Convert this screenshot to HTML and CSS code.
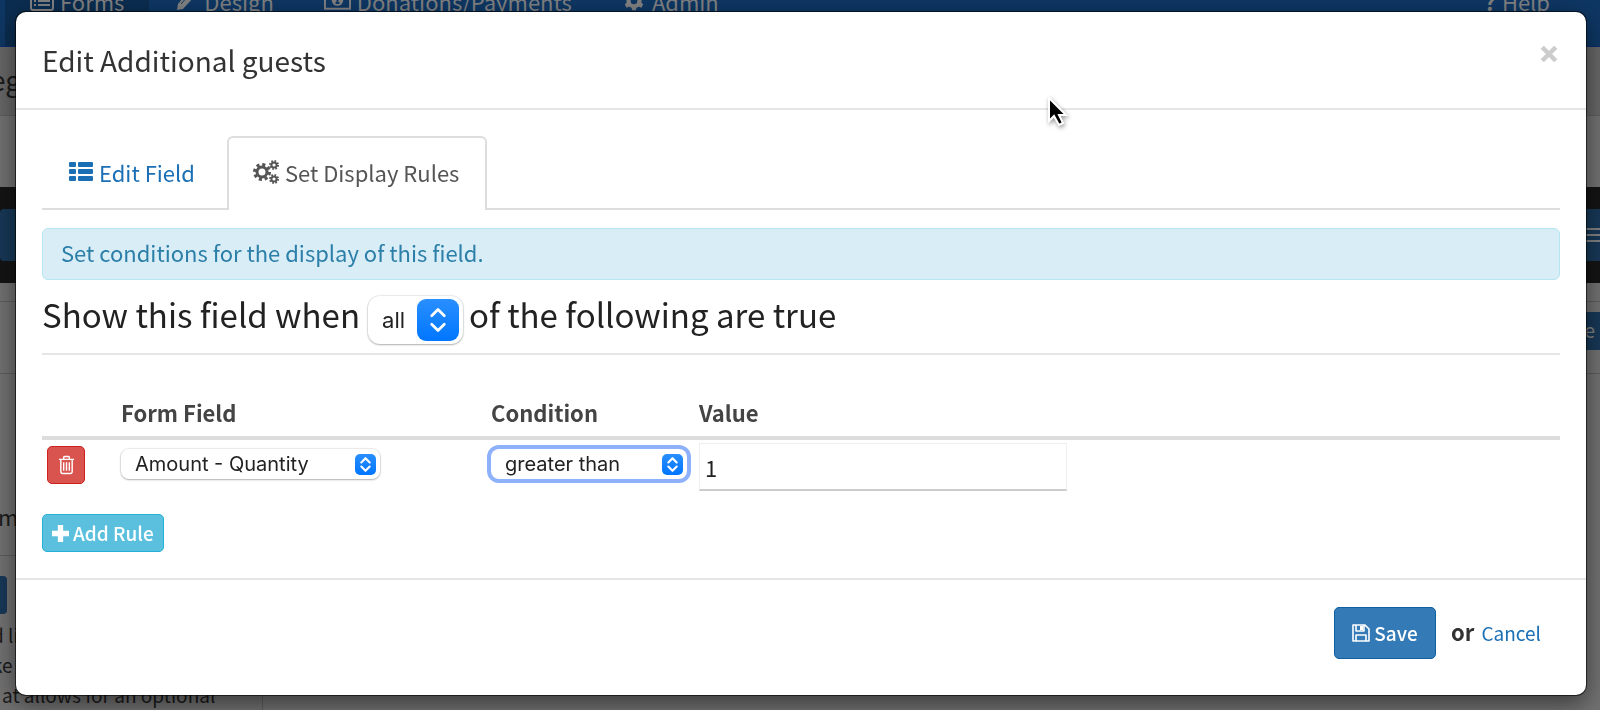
FILE: index.html
```html
<!DOCTYPE html>
<html lang="en">
<head>
    <meta charset="UTF-8">
    <meta name="viewport" content="width=device-width, initial-scale=1.0">
    <title>Edit Additional guests</title>
    <link rel="stylesheet" href="styles.css">
</head>
<body>
    <!-- page behind the dialog -->
    <div class="page">
        <nav class="navbar">
            <a class="nav-item active" href="#">
                <svg class="nav-icon" viewBox="0 0 24 20"><rect x="1" y="1" width="22" height="18" rx="2" fill="none" stroke="currentColor" stroke-width="2"/><path d="M4 6h2M8 6h12M4 10h2M8 10h12M4 14h2M8 14h12" stroke="currentColor" stroke-width="2"/></svg>
                Forms
            </a>
            <a class="nav-item" href="#">
                <svg class="nav-icon" viewBox="0 0 24 20"><path d="M3 19l1-6L14 1l6 5L9 18z" fill="currentColor"/><path d="M7 13l8-9" stroke="#0e3763" stroke-width="1"/></svg>
                Design
            </a>
            <a class="nav-item" href="#">
                <svg class="nav-icon wide" viewBox="0 0 28 20"><rect x="1" y="1" width="26" height="17" fill="none" stroke="currentColor" stroke-width="2"/><circle cx="14" cy="9" r="6" fill="currentColor"/><path d="M12 7l2-1v6M12 12h4" fill="none" stroke="#0e3763" stroke-width="2"/></svg>
                Donations/Payments
            </a>
            <a class="nav-item" href="#">
                <svg class="nav-icon" viewBox="0 0 24 24"><path d="M10 1h4l1 3 3 1 3-1 2 4-2 2v4l2 2-2 4-3-1-3 1-1 3h-4l-1-3-3-1-3 1-2-4 2-2v-4L1 8l2-4 3 1 3-1z" fill="currentColor"/><circle cx="12" cy="12" r="4" fill="#0e3763"/></svg>
                Admin
            </a>
            <a class="nav-item help" href="#"><b>?</b> Help</a>
        </nav>
        <div class="page-title">eg</div>
        <div class="page-space"></div>
        <div class="toolbar">
            <span class="tool"></span>
            <span class="tool menu"><i></i><i></i><i></i></span>
        </div>
        <div class="row-tabs"><span class="side-btn">e</span></div>
        <div class="row-field">m</div>
        <div class="row-help">
            <span class="help-btn"></span>
            <p class="clipped">d li</p>
            <p class="clipped">ke</p>
            <p>at allows for an optional</p>
        </div>
    </div>

    <div class="backdrop">
        <div class="modal" role="dialog" aria-labelledby="title">
            <div class="modal-header">
                <h4 id="title">Edit Additional guests</h4>
                <button class="close" type="button" aria-label="Close">
                    <svg viewBox="0 0 16 16"><path d="M2 2l12 12M14 2 2 14" stroke="currentColor" stroke-width="4"/></svg>
                </button>
            </div>
            <div class="modal-body">
                <ul class="tabs">
                    <li><a href="#">
                        <svg class="icon-list" viewBox="0 0 24 20"><path d="M1 0h5q1 0 1 1v3q0 1-1 1H1Q0 5 0 4V1q0-1 1-1zM10 0h13q1 0 1 1v3q0 1-1 1H10Q9 5 9 4V1q0-1 1-1zM1 7h5q1 0 1 1v3q0 1-1 1H1q-1 0-1-1V8q0-1 1-1zM10 7h13q1 0 1 1v3q0 1-1 1H10q-1 0-1-1V8q0-1 1-1zM1 14h5q1 0 1 1v3q0 1-1 1H1q-1 0-1-1v-3q0-1 1-1zM10 14h13q1 0 1 1v3q0 1-1 1H10q-1 0-1-1v-3q0-1 1-1z" fill="currentColor"/></svg>
                        Edit Field
                    </a></li>
                    <li class="active"><a href="#">
                        <svg class="icon-gears" viewBox="0 0 26 24"><g fill="none" stroke="currentColor"><circle cx="9" cy="12" r="5" stroke-width="3"/><circle cx="9" cy="12" r="7" stroke-width="4" stroke-dasharray="2.9 2.6"/><circle cx="21" cy="5" r="2.6" stroke-width="2"/><circle cx="21" cy="5" r="4" stroke-width="2" stroke-dasharray="1.6 1.54"/><circle cx="21" cy="19" r="2.6" stroke-width="2"/><circle cx="21" cy="19" r="4" stroke-width="2" stroke-dasharray="1.6 1.54"/></g></svg>
                        Set Display Rules
                    </a></li>
                </ul>
                <div class="alert">Set conditions for the display of this field.</div>
                <div class="match">
                    <label for="match">Show this field when</label>
                    <span class="select large">
                        <select id="match"><option>all</option></select>
                        <svg viewBox="0 0 20 20"><path d="M7 8l3-3 3 3M7 12l3 3 3-3" fill="none" stroke="#fff" stroke-width="1.3" stroke-linecap="round" stroke-linejoin="round"/></svg>
                    </span>
                    <span>of the following are true</span>
                </div>
                <table class="rules">
                    <thead>
                        <tr>
                            <th class="col-del"></th>
                            <th class="col-field">Form Field</th>
                            <th class="col-cond">Condition</th>
                            <th>Value</th>
                        </tr>
                    </thead>
                    <tbody>
                        <tr>
                            <td class="col-del">
                                <button class="btn btn-danger" type="button" aria-label="Delete rule">
                                    <svg viewBox="0 0 18 20"><path d="M1 4h16M6 4V2q0-1 1-1h4q1 0 1 1v2M3 4v13q0 2 2 2h8q2 0 2-2V4M6 7v9M9 7v9M12 7v9" fill="none" stroke="currentColor" stroke-width="1.5"/></svg>
                                </button>
                            </td>
                            <td class="col-field">
                                <span class="select field">
                                    <select aria-label="Form Field"><option>Amount - Quantity</option></select>
                                    <svg viewBox="0 0 20 20"><path d="M6 8l4-4 4 4M6 12l4 4 4-4" fill="none" stroke="#fff" stroke-width="2" stroke-linecap="round" stroke-linejoin="round"/></svg>
                                </span>
                            </td>
                            <td class="col-cond">
                                <span class="select focused">
                                    <select aria-label="Condition"><option>greater than</option></select>
                                    <svg viewBox="0 0 20 20"><path d="M6 8l4-4 4 4M6 12l4 4 4-4" fill="none" stroke="#fff" stroke-width="2" stroke-linecap="round" stroke-linejoin="round"/></svg>
                                </span>
                            </td>
                            <td><input class="value" type="text" value="1" aria-label="Value"></td>
                        </tr>
                    </tbody>
                </table>
                <button class="btn btn-info" type="button">
                    <svg viewBox="0 0 16 16"><path d="M8 0v16M0 8h16" stroke="currentColor" stroke-width="5"/></svg>
                    Add Rule
                </button>
            </div>
            <div class="modal-footer">
                <button class="btn btn-primary" type="button">
                    <svg viewBox="0 0 18 18"><path d="M1 1h12l4 4v12H1zM4 1v6h8V1M4 17v-6h10v6" fill="none" stroke="currentColor" stroke-width="1.6" stroke-linejoin="round"/><path d="M8 2h3v4H8z" fill="currentColor"/></svg>
                    Save
                </button>
                <strong>or</strong>
                <a href="#">Cancel</a>
            </div>
        </div>
    </div>
    <svg class="cursor" viewBox="0 0 19 30"><path d="M1 1v23l5-5 5 9 4-2-4-8h7z" fill="#000" stroke="#fff" stroke-width="2"/></svg>
</body>
</html>
```

FILE: styles.css
```css
* {
    box-sizing: border-box;
}
body {
    margin: 0;
    height: 100vh;
    overflow: hidden;
    font-family: "Noto Sans CJK SC", "Noto Sans", sans-serif;
    font-size: 22px;
    line-height: 32px;
    color: #333;
    background-color: #fff;
}
a {
    color: #1b6fb5;
    text-decoration: none;
}
button, select, input {
    font-family: inherit;
}

/* page behind the dialog */
.page {
    height: 100vh;
    overflow: hidden;
    background-color: #717171;
    color: #1a1a1a;
}
.navbar {
    display: flex;
    align-items: flex-start;
    height: 47px;
    padding-left: 5px;
    background-color: #0e3763;
    border-bottom: 1px solid #0a2d6b;
}
.nav-item {
    display: flex;
    align-items: center;
    gap: 6px;
    height: 46px;
    padding: 0 25px 44px;
    line-height: 2px;
    color: #808080;
}
.nav-item.active {
    background-color: #0b2d50;
}
.nav-item.help {
    margin-left: auto;
    padding-right: 50px;
}
.nav-icon {
    width: 24px;
    height: 20px;
    flex: none;
}
.nav-icon.wide {
    width: 27px;
}
.page-title {
    height: 69px;
    padding-top: 16px;
    font-size: 28px;
    text-indent: -10px;
    background-color: #666;
    border-bottom: 1px solid #5c5c5c;
}
.page-space {
    height: 71px;
}
.toolbar {
    display: flex;
    align-items: center;
    justify-content: space-between;
    height: 96px;
    background-color: #141414;
}
.tool {
    width: 20px;
    height: 52px;
    background-color: #173857;
    border-radius: 4px;
}
.menu {
    display: flex;
    flex-direction: column;
    justify-content: center;
    gap: 4px;
    border-radius: 0;
}
.menu i {
    height: 2px;
    background-color: #808080;
}
.row-tabs {
    display: flex;
    justify-content: flex-end;
    align-items: flex-start;
    height: 73px;
    margin-top: 18px;
    padding-top: 10px;
    border-top: 1px solid #5c5c5c;
    border-bottom: 1px solid #5c5c5c;
}
.side-btn {
    width: 16px;
    height: 38px;
    font-size: 20px;
    line-height: 36px;
    color: #808080;
    background-color: #173857;
}
.row-field {
    height: 181px;
    padding-top: 126px;
    text-indent: -2px;
}
.row-help {
    width: 263px;
    height: 160px;
    padding-top: 20px;
    border-top: 1px solid #5c5c5c;
    border-right: 1px solid #5c5c5c;
    font-size: 19px;
    line-height: 30px;
}
.row-help p {
    margin: 0;
    padding-left: 2px;
}
.row-help .clipped {
    text-indent: -10px;
}
.help-btn {
    display: block;
    width: 7px;
    height: 38px;
    margin-bottom: 6px;
    background-color: #173857;
    border-radius: 0 4px 4px 0;
}

/* dialog */
.backdrop {
    position: fixed;
    inset: 0;
    padding: 12px 14px 15px 16px;
}
.modal {
    display: flex;
    flex-direction: column;
    height: 100%;
    background-color: #fff;
    border-radius: 10px;
    box-shadow: 0 0 0 1px rgba(0, 0, 0, 0.6), 0 8px 24px rgba(0, 0, 0, 0.5);
}
.modal-header {
    display: flex;
    justify-content: space-between;
    align-items: flex-start;
    height: 98px;
    padding: 32px 28px 0 26px;
    border-bottom: 2px solid #e5e5e5;
}
.modal-header h4 {
    margin: 0;
    font-size: 28px;
    font-weight: 400;
}
.close {
    padding: 1px 0 0;
    border: 0;
    background: none;
    color: #ccc;
    line-height: 0;
}
.close svg {
    width: 18px;
    height: 18px;
}
.modal-body {
    flex: 1;
    padding: 26px;
}
.tabs {
    display: flex;
    margin: 0 0 18px;
    padding: 0;
    list-style: none;
    border-bottom: 2px solid #ddd;
}
.tabs li {
    margin-bottom: -2px;
}
.tabs a {
    display: flex;
    align-items: center;
    gap: 6px;
    height: 74px;
    padding: 0 32px 2px 27px;
}
.tabs .active a {
    padding: 0 26px 4px 24px;
    color: #555;
    background-color: #fff;
    border: 2px solid #ddd;
    border-bottom: 0;
    border-radius: 6px 6px 0 0;
}
.icon-list {
    width: 24px;
    height: 20px;
}
.icon-gears {
    width: 26px;
    height: 24px;
}
.alert {
    height: 52px;
    padding: 7px 18px;
    color: #2b7fa8;
    background-color: #d9edf7;
    border: 1px solid #b5e5f0;
    border-radius: 6px;
}
.match {
    display: flex;
    align-items: flex-start;
    gap: 6px;
    height: 75px;
    padding-top: 12px;
    font-size: 33px;
    line-height: 44px;
    color: #222;
    border-bottom: 2px solid #e5e5e5;
}
.select {
    display: inline-grid;
    align-items: center;
    height: 30px;
    background-color: #fff;
    border-radius: 8px;
    box-shadow: 0 0 1px 1px rgba(0, 0, 0, 0.08), 0 1px 2px rgba(0, 0, 0, 0.25);
}
.select select, .select svg {
    grid-area: 1 / 1;
}
.select select {
    appearance: none;
    width: 100%;
    height: 100%;
    padding: 0 14px;
    border: 0;
    outline: 0;
    background: none;
    font-family: Inter, sans-serif;
    font-size: 20px;
    color: #222;
}
.select svg {
    justify-self: end;
    width: 21px;
    height: 21px;
    margin-right: 4px;
    border-radius: 5px;
    background: linear-gradient(#2a8fff, #0076ff);
    pointer-events: none;
}
.select.large {
    width: 95px;
    height: 48px;
    margin: 4px 0 0 2px;
    border-radius: 12px;
}
.select.large select {
    font-size: 22px;
}
.select.large svg {
    width: 42px;
    height: 42px;
    border-radius: 9px;
}
.select.field {
    width: 259px;
}
.select.focused {
    width: 196px;
    box-shadow: 0 0 0 4px #8db1fb;
}
.rules {
    width: 100%;
    margin-top: 34px;
    border-collapse: collapse;
    table-layout: fixed;
}
.rules th {
    height: 49px;
    padding: 0 0 2px;
    text-align: left;
    font-weight: 700;
    color: #444;
    border-bottom: 4px solid #ddd;
}
.rules td {
    height: 62px;
    padding: 3px 0 0;
    vertical-align: top;
    line-height: 0;
}
.rules .col-del {
    width: 79px;
}
.rules td.col-del {
    padding: 6px 0 0 5px;
}
.rules .col-field {
    width: 370px;
}
.rules .col-cond {
    width: 208px;
}
.rules td.col-field, .rules td.col-cond {
    padding-top: 9px;
}
.value {
    width: 368px;
    height: 48px;
    padding: 0 5px;
    border: 1px solid #eee;
    border-bottom: 2px solid #ccc;
    font-size: 22px;
    color: #222;
}
.btn {
    display: inline-flex;
    align-items: center;
    justify-content: center;
    gap: 4px;
    height: 38px;
    padding: 0 9px;
    border: 1px solid;
    border-radius: 5px;
    font-size: 19px;
    font-weight: 500;
    line-height: 28px;
    color: #fff;
}
.btn svg {
    width: 17px;
    height: 17px;
}
.btn-danger {
    width: 38px;
    padding: 0;
    background-color: #d9534f;
    border-color: #d01f1f;
}
.btn-danger svg {
    height: 20px;
}
.btn-info {
    margin-top: 14px;
    background-color: #5bc0de;
    border-color: #26b0d8;
}
.btn-primary {
    width: 102px;
    height: 52px;
    background-color: #337ab7;
    border-color: #10609f;
}
.btn-primary svg {
    width: 18px;
    height: 18px;
}
.modal-footer {
    display: flex;
    justify-content: flex-end;
    align-items: center;
    height: 117px;
    padding: 0 45px 10px;
    border-top: 2px solid #e5e5e5;
}
.modal-footer strong {
    margin: 0 7px 4px 15px;
}
.modal-footer a {
    font-size: 19px;
}
.cursor {
    position: fixed;
    left: 1048px;
    top: 97px;
    width: 19px;
    height: 30px;
    overflow: visible;
    filter: drop-shadow(1px 2px 2px rgba(0, 0, 0, 0.4));
}
```
